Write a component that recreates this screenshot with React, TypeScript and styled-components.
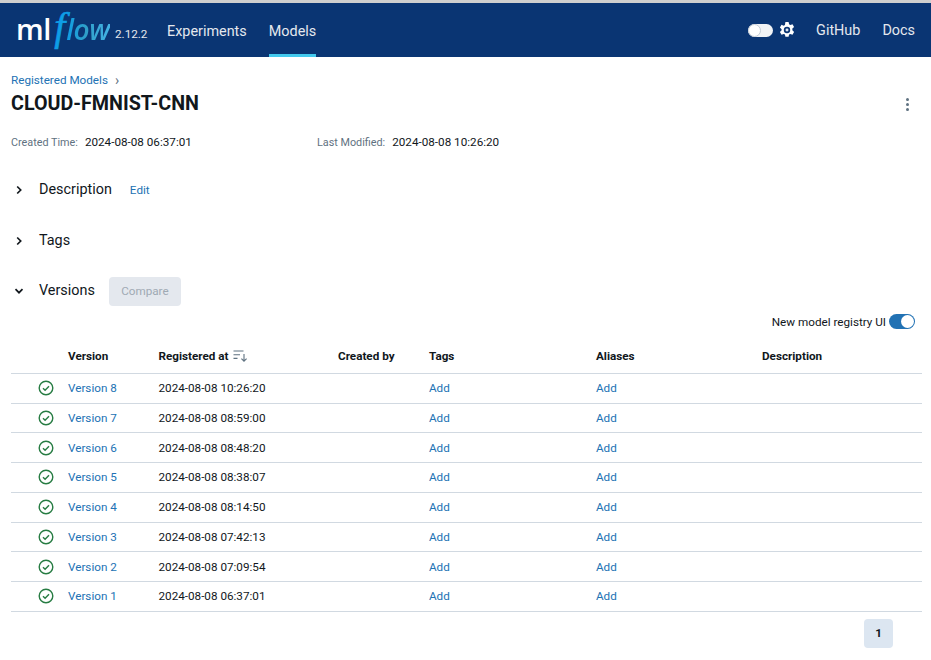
import React from 'react';
import styled, { createGlobalStyle } from 'styled-components';

const versions = [
  { name: 'Version 8', time: '2024-08-08 10:26:20' },
  { name: 'Version 7', time: '2024-08-08 08:59:00' },
  { name: 'Version 6', time: '2024-08-08 08:48:20' },
  { name: 'Version 5', time: '2024-08-08 08:38:07' },
  { name: 'Version 4', time: '2024-08-08 08:14:50' },
  { name: 'Version 3', time: '2024-08-08 07:42:13' },
  { name: 'Version 2', time: '2024-08-08 07:09:54' },
  { name: 'Version 1', time: '2024-08-08 06:37:01' },
];

function Chevron({ open }: { open?: boolean }) {
  return (
    <ChevronBox>
      <svg width="16" height="16" viewBox="0 0 16 16" fill="none">
        <path
          d={open ? 'M4.5 6.2 8 9.7l3.5-3.5' : 'M6.2 4.5 9.7 8l-3.5 3.5'}
          stroke="#11171c"
          strokeWidth="1.7"
        />
      </svg>
    </ChevronBox>
  );
}

function App() {
  return (
    <>
      <GlobalStyle />
      <Header>
        <LogoLink>
          <LogoMl>ml</LogoMl>
          <LogoF>f</LogoF>
          <LogoFlow>low</LogoFlow>
        </LogoLink>
        <Release>2.12.2</Release>
        <NavLink>Experiments</NavLink>
        <NavLink $active>Models</NavLink>
        <HeaderRight>
          <ThemeSwitch />
          <GearIcon width="16" height="16" viewBox="1 1 14 14" fill="none">
            <path
              d="M6.6 1h2.8l.4 2 1.1.6 1.9-.7 1.4 2.4-1.5 1.4v1.6l1.5 1.4-1.4 2.4-1.9-.7-1.1.6-.4 2H6.6l-.4-2-1.1-.6-1.9.7-1.4-2.4 1.5-1.4V7.3L1.8 5.9l1.4-2.4 1.9.7 1.1-.6z"
              fill="#fff"
            />
            <circle cx="8" cy="8" r="2.8" fill="#0a3573" />
            <circle cx="8" cy="8" r="1.3" fill="#dfe6ef" />
          </GearIcon>
          <SideLink>GitHub</SideLink>
          <SideLink $wide>Docs</SideLink>
        </HeaderRight>
      </Header>
      <Main>
        <Breadcrumb>
          <a>Registered Models</a>
          <span>›</span>
        </Breadcrumb>
        <TitleRow>
          <Title>CLOUD-FMNIST-CNN</Title>
          <MoreDots>
            <i />
            <i />
            <i />
          </MoreDots>
        </TitleRow>
        <Meta>
          <MetaItem>
            <label>Created Time:</label>
            <span>2024-08-08 06:37:01</span>
          </MetaItem>
          <MetaItem>
            <label>Last Modified:</label>
            <span>2024-08-08 10:26:20</span>
          </MetaItem>
        </Meta>
        <SectionList>
          <Section>
            <Chevron />
            <SectionTitle>Description</SectionTitle>
            <EditLink>Edit</EditLink>
          </Section>
          <Section>
            <Chevron />
            <SectionTitle>Tags</SectionTitle>
          </Section>
          <Section>
            <Chevron open />
            <SectionTitle>Versions</SectionTitle>
            <CompareButton disabled>Compare</CompareButton>
          </Section>
        </SectionList>
        <ToggleRow>
          <span>New model registry UI</span>
          <RegistrySwitch />
        </ToggleRow>
        <HeadRow>
          <span />
          <span>Version</span>
          <SortCell>
            Registered at
            <svg width="15" height="12" viewBox="0 0 15 12" fill="none" stroke="#5f7281" strokeWidth="1.1">
              <path d="M0.5 1h10M0.5 4.7h6.5M0.5 8.4h4" />
              <path d="M11 4v7.2M8.4 8.6l2.6 2.6 2.6-2.6" />
            </svg>
          </SortCell>
          <span>Created by</span>
          <span>Tags</span>
          <span>Aliases</span>
          <span>Description</span>
        </HeadRow>
        {versions.map((v) => (
          <Row key={v.name}>
            <StatusCell>
              <svg width="16" height="16" viewBox="0 0 16 16" fill="none" stroke="#277c43" strokeWidth="1.4">
                <circle cx="8" cy="8" r="6.8" />
                <path d="M5 8.2l2.1 2.1L11 6.2" />
              </svg>
            </StatusCell>
            <LinkText>{v.name}</LinkText>
            <span>{v.time}</span>
            <span />
            <LinkText>Add</LinkText>
            <LinkText>Add</LinkText>
            <span />
          </Row>
        ))}
        <Pager>
          <PageButton>1</PageButton>
        </Pager>
      </Main>
    </>
  );
}

export default App;

const GlobalStyle = createGlobalStyle`
  html, body {
    margin: 0;
    background: #fff;
    font-family: Roboto, "Liberation Sans", sans-serif;
    color: #11171c;
  }
`;

const Header = styled.header`
  height: 54px;
  display: flex;
  align-items: center;
  padding: 0 16px 0 16px;
  background: #0a3573;
  border-top: 3px solid #cfcfcf;
  box-sizing: content-box;
`;

const LogoLink = styled.div`
  width: 95px;
  display: flex;
  align-items: baseline;
  margin-top: -6px;
  white-space: nowrap;
`;

const LogoMl = styled.span`
  font: 600 29px/1 "Open Sans", sans-serif;
  color: #fff;
  letter-spacing: -0.3px;
`;

const LogoF = styled.span`
  margin-left: 3px;
  font: italic 400 40px/1 "Liberation Serif", serif;
  color: #0e9ee6;
  -webkit-text-stroke: 0.6px #0e9ee6;
`;

const LogoFlow = styled.span`
  margin-left: 1px;
  font: italic 600 28px/1 "Open Sans", sans-serif;
  letter-spacing: -0.4px;
  background: linear-gradient(90deg, #0e9ee6 0%, #2f9fc8 45%, #43b4e6 100%);
  -webkit-background-clip: text;
  background-clip: text;
  color: transparent;
`;

const Release = styled.span`
  width: 52px;
  margin-top: 8px;
  margin-left: 4px;
  font-size: 11.7px;
  color: #e4e8ee;
`;

const NavLink = styled.a<{ $active?: boolean }>`
  height: 100%;
  display: flex;
  align-items: center;
  box-sizing: border-box;
  margin-right: 22px;
  padding-top: 2px;
  font-size: 14.4px;
  color: #e4e8ee;
  border-bottom: 3px solid ${(p) => (p.$active ? '#43c9ed' : 'transparent')};
  border-top: 3px solid transparent;
`;

const HeaderRight = styled.div`
  margin-left: auto;
  display: flex;
  align-items: center;
`;

const ThemeSwitch = styled.span`
  position: relative;
  width: 25px;
  height: 13px;
  margin-right: 6px;
  border-radius: 7px;
  background: #f1f3f6;
  &::after {
    content: '';
    position: absolute;
    left: 0;
    top: 0;
    width: 13px;
    height: 13px;
    box-sizing: border-box;
    border: 1px solid #c4ccd6;
    border-radius: 50%;
    background: #fff;
  }
`;

const GearIcon = styled.svg`
  flex: none;
`;

const SideLink = styled.a<{ $wide?: boolean }>`
  margin-left: ${(p) => (p.$wide ? '22px' : '21px')};
  font-size: 14.4px;
  color: #e4e8ee;
`;

const Main = styled.main`
  padding: 15px 9px 0 11px;
`;

const Breadcrumb = styled.div`
  display: flex;
  align-items: center;
  gap: 7px;
  height: 16px;
  font-size: 11.7px;
  color: #2272b4;
  span {
    color: #5f7281;
    font-size: 14px;
    line-height: 14px;
  }
`;

const TitleRow = styled.div`
  display: flex;
  align-items: center;
  justify-content: space-between;
  height: 30px;
`;

const Title = styled.h1`
  margin: 0;
  font-size: 19.7px;
  font-weight: 700;
`;

const MoreDots = styled.div`
  width: 3px;
  display: flex;
  flex-direction: column;
  gap: 2px;
  margin-right: 13px;
  margin-top: 2px;
  i {
    width: 3px;
    height: 3px;
    border-radius: 50%;
    background: #5f7281;
  }
`;

const Meta = styled.div`
  display: flex;
  height: 16px;
  margin: 16px 0 25.5px;
  align-items: center;
`;

const MetaItem = styled.div`
  width: 306px;
  display: flex;
  align-items: center;
  gap: 7px;
  font-size: 11.7px;
  label {
    font-size: 10.8px;
    color: #5f7281;
  }
`;

const SectionList = styled.div`
  display: flex;
  flex-direction: column;
  gap: 21.5px;
  margin-bottom: 9px;
`;

const Section = styled.div`
  display: flex;
  align-items: center;
  height: 29px;
`;

const ChevronBox = styled.span`
  display: flex;
  width: 28px;
`;

const SectionTitle = styled.h2`
  margin: 0;
  font-size: 14.4px;
  font-weight: 400;
  line-height: 20px;
`;

const EditLink = styled.a`
  margin-left: 18px;
  font-size: 11.7px;
  color: #2272b4;
`;

const CompareButton = styled.button`
  width: 72px;
  height: 29px;
  margin-left: 14px;
  border: 0;
  border-radius: 4px;
  background: #e4e8ee;
  color: #a0aab4;
  font: 400 11.7px Roboto, sans-serif;
`;

const ToggleRow = styled.div`
  display: flex;
  justify-content: flex-end;
  align-items: center;
  gap: 3px;
  height: 14px;
  font-size: 11.7px;
`;

const RegistrySwitch = styled.span`
  position: relative;
  width: 26px;
  height: 15px;
  margin-right: 7px;
  border-radius: 8px;
  background: #2272b4;
  &::after {
    content: '';
    position: absolute;
    right: 1px;
    top: 1px;
    width: 13px;
    height: 13px;
    border-radius: 50%;
    background: #fff;
  }
`;

const gridColumns = '57px 90.5px 179.5px 91px 167px 166px 1fr';

const HeadRow = styled.div`
  display: grid;
  grid-template-columns: ${gridColumns};
  align-items: center;
  height: 34.25px;
  margin-top: 10px;
  border-bottom: 1px solid #d1d9e1;
  font-size: 11.7px;
  font-weight: 700;
`;

const SortCell = styled.span`
  display: flex;
  align-items: center;
  gap: 4px;
`;

const Row = styled.div`
  display: grid;
  grid-template-columns: ${gridColumns};
  align-items: center;
  box-sizing: border-box;
  height: 29.75px;
  border-bottom: 1px solid #d1d9e1;
  font-size: 11.7px;
`;

const StatusCell = styled.span`
  display: flex;
  justify-content: flex-end;
  padding-right: 14px;
`;

const LinkText = styled.a`
  color: #2272b4;
`;

const Pager = styled.div`
  display: flex;
  justify-content: flex-end;
  padding: 7px 29px 0 0;
`;

const PageButton = styled.button`
  width: 29px;
  height: 29px;
  border: 0;
  border-radius: 4px;
  background: #dce6f1;
  color: #11171c;
  font: 700 11.7px Roboto, sans-serif;
`;
